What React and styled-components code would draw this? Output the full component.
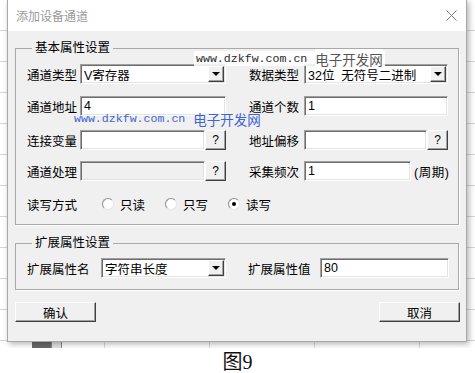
import React from "react";
import styled, { createGlobalStyle } from "styled-components";

const Global = createGlobalStyle`
body {
    margin: 0;
    background: #fff;
}
`

const Screen = styled.div`
height: 348px;
width: 475px;
box-sizing: border-box;
padding-left: 7px;
background-color: #fff;
background-image:
    repeating-linear-gradient(to bottom, transparent 0, transparent 30px, #d6d6d6 30px, #d6d6d6 31px),
    repeating-linear-gradient(to right, transparent 0, transparent 104px, #dcdcdc 104px, #dcdcdc 105px);
overflow: hidden;
`

const Dialog = styled.div`
position: relative;
width: 460px;
height: 342px;
box-sizing: border-box;
background: #f0f0f0;
border: 1px solid #a8a8a8;
border-top: none;
box-shadow: 2px 2px 6px rgba(0, 0, 0, 0.3);
font-family: "Liberation Sans", "Noto Sans CJK SC", sans-serif;
font-size: 12.5px;
color: #000;
`

const TitleBar = styled.div`
height: 31px;
background: #fff;
display: flex;
align-items: center;
justify-content: space-between;
padding: 0 9px 0 8px;
`

const Title = styled.div`
color: #9a9a9a;
font-size: 12px;
`

const Body = styled.div`
padding: 9px 6px 0 7px;
`

const Group = styled.fieldset`
margin: ${p => p.$top || 0}px 0 0 0;
width: 443px;
box-sizing: border-box;
padding: ${p => p.$pad};
border: 1px solid #a9a9a9;
box-shadow: 1px 1px 0 #fff;
`

const Legend = styled.legend`
padding: 0 3px;
margin-left: 5px;
line-height: 16px;
`

const Row = styled.div`
display: flex;
align-items: center;
height: 20px;
margin-top: ${p => p.$top || 0}px;
`

const Field = styled.div`
display: flex;
align-items: center;
width: ${p => p.$w}px;
`

const Label = styled.span`
width: ${p => p.$w}px;
flex: none;
white-space: nowrap;
`

const Box = styled.div`
width: ${p => p.$w}px;
height: 20px;
flex: none;
box-sizing: border-box;
display: flex;
align-items: center;
padding: 0 2px;
border: 1px solid;
border-color: #a0a0a0 #fff #fff #a0a0a0;
box-shadow: inset 1px 1px 0 #6e6e6e, inset -1px -1px 0 #e3e3e3;
background: ${p => (p.$off ? "#f0f0f0" : "#fff")};
white-space: pre;
`

const BoxText = styled.span`
flex: 1;
padding-left: 1px;
`

const Arrow = styled.div`
width: 16px;
height: 16px;
box-sizing: border-box;
display: flex;
align-items: center;
justify-content: center;
background: #f0f0f0;
border: 1px solid;
border-color: #fff #404040 #404040 #fff;
box-shadow: inset -1px -1px 0 #a0a0a0;
margin-right: -1px;

&::after {
    content: "";
    border-left: 4px solid transparent;
    border-right: 4px solid transparent;
    border-top: 4px solid #000;
}
`

const Ask = styled.div`
width: 21px;
height: 20px;
flex: none;
box-sizing: border-box;
display: flex;
align-items: center;
justify-content: center;
background: #f0f0f0;
border: 1px solid;
border-color: #fff #404040 #404040 #fff;
box-shadow: inset -1px -1px 0 #a0a0a0;
font-size: 12px;
`

const Unit = styled.span`
margin-left: 3px;
white-space: nowrap;
letter-spacing: 0.5px;
`

const Radios = styled.div`
display: flex;
align-items: center;
`

const RadioItem = styled.label`
display: flex;
align-items: center;
width: 63px;
`

const Dot = styled.span`
width: 12px;
height: 12px;
box-sizing: border-box;
border-radius: 50%;
border: 1px solid;
border-color: #8a8a8a #e6e6e6 #e6e6e6 #8a8a8a;
background: #fff;
margin-right: 6px;
display: flex;
align-items: center;
justify-content: center;

&::after {
    content: "";
    width: 4px;
    height: 4px;
    border-radius: 50%;
    background: ${p => (p.$on ? "#000" : "transparent")};
}
`

const Buttons = styled.div`
display: flex;
justify-content: space-between;
width: 445px;
margin-top: 12px;
`

const Button = styled.div`
width: 81px;
height: 20px;
box-sizing: border-box;
display: flex;
align-items: center;
justify-content: center;
background: #f0f0f0;
border: 1px solid;
border-color: #fff #404040 #404040 #fff;
box-shadow: inset -1px -1px 0 #a0a0a0;
`

const Mark = styled.div`
position: absolute;
left: ${p => p.$x}px;
top: ${p => p.$y}px;
display: flex;
align-items: center;
height: 15px;
background: ${p => (p.$blue ? "transparent" : "rgba(255,255,255,0.85)")};
color: ${p => (p.$blue ? "#3e63d6" : "#2a2a2a")};
padding: 0 2px;
pointer-events: none;
`

const MarkUrl = styled.span`
font-family: "Liberation Mono", monospace;
font-size: 11.6px;
`

const MarkName = styled.span`
margin-left: 8px;
font-size: 13.5px;
color: ${p => (p.$blue ? "#3e63d6" : "#555")};
background: ${p => (p.$blue ? "transparent" : "#fff")};
`

const Strip = styled.div`
display: flex;
height: 6px;
margin-left: 25px;
`

const Cell = styled.div`
width: ${p => p.$w}px;
background: ${p => p.$bg};
border-right: 1px solid #8a8a8a;
`

const Caption = styled.div`
height: 25px;
display: flex;
align-items: center;
justify-content: center;
font-family: "Liberation Serif", "Noto Sans CJK SC", serif;
font-size: 20px;
color: #111;
`

const Close = () => (
    <svg width="11" height="11" viewBox="0 0 11 11">
        <path d="M0.5 0.5 L10.5 10.5 M10.5 0.5 L0.5 10.5" stroke="#7a7a7a" strokeWidth="1" />
    </svg>
)

const Combo = ({w, text}) => (
    <Box $w={w}>
        <BoxText>{text}</BoxText>
        <Arrow />
    </Box>
)

const App = () => (
    <>
        <Global />
        <Screen>
            <Dialog>
                <TitleBar>
                    <Title>添加设备通道</Title>
                    <Close />
                </TitleBar>
                <Body>
                    <Group $pad="8px 9px 10px 11px">
                        <Legend>基本属性设置</Legend>
                        <Row>
                            <Field $w={222}>
                                <Label $w={53}>通道类型</Label>
                                <Combo w={146} text="V寄存器" />
                            </Field>
                            <Field>
                                <Label $w={55}>数据类型</Label>
                                <Combo w={144} text="32位  无符号二进制" />
                            </Field>
                        </Row>
                        <Row $top={12}>
                            <Field $w={222}>
                                <Label $w={53}>通道地址</Label>
                                <Box $w={146}><BoxText>4</BoxText></Box>
                            </Field>
                            <Field>
                                <Label $w={55}>通道个数</Label>
                                <Box $w={144}><BoxText>1</BoxText></Box>
                            </Field>
                        </Row>
                        <Row $top={14}>
                            <Field $w={222}>
                                <Label $w={53}>连接变量</Label>
                                <Box $w={125} />
                                <Ask>?</Ask>
                            </Field>
                            <Field>
                                <Label $w={55}>地址偏移</Label>
                                <Box $w={123} />
                                <Ask>?</Ask>
                            </Field>
                        </Row>
                        <Row $top={11}>
                            <Field $w={222}>
                                <Label $w={53}>通道处理</Label>
                                <Box $w={125} $off />
                                <Ask>?</Ask>
                            </Field>
                            <Field>
                                <Label $w={55}>采集频次</Label>
                                <Box $w={107}><BoxText>1</BoxText></Box>
                                <Unit>(周期)</Unit>
                            </Field>
                        </Row>
                        <Row $top={13}>
                            <Label $w={75}>读写方式</Label>
                            <Radios>
                                <RadioItem><Dot />只读</RadioItem>
                                <RadioItem><Dot />只写</RadioItem>
                                <RadioItem><Dot $on />读写</RadioItem>
                            </Radios>
                        </Row>
                    </Group>
                    <Group $top={10} $pad="7px 9px 11px 11px">
                        <Legend>扩展属性设置</Legend>
                        <Row>
                            <Field $w={221}>
                                <Label $w={74}>扩展属性名</Label>
                                <Combo w={125} text="字符串长度" />
                            </Field>
                            <Field>
                                <Label $w={72}>扩展属性值</Label>
                                <Box $w={129}><BoxText>80</BoxText></Box>
                            </Field>
                        </Row>
                    </Group>
                    <Buttons>
                        <Button>确认</Button>
                        <Button>取消</Button>
                    </Buttons>
                </Body>
                <Mark $x={186} $y={51}>
                    <MarkUrl>www.dzkfw.com.cn</MarkUrl>
                    <MarkName>电子开发网</MarkName>
                </Mark>
                <Mark $x={64} $y={111} $blue>
                    <MarkUrl>www.dzkfw.com.cn</MarkUrl>
                    <MarkName $blue>电子开发网</MarkName>
                </Mark>
            </Dialog>
            <Strip>
                <Cell $w={19} $bg="#6b6b6b" />
                <Cell $w={9} $bg="#e4e4e4" />
            </Strip>
        </Screen>
        <Caption>图9</Caption>
    </>
)

export default App;
